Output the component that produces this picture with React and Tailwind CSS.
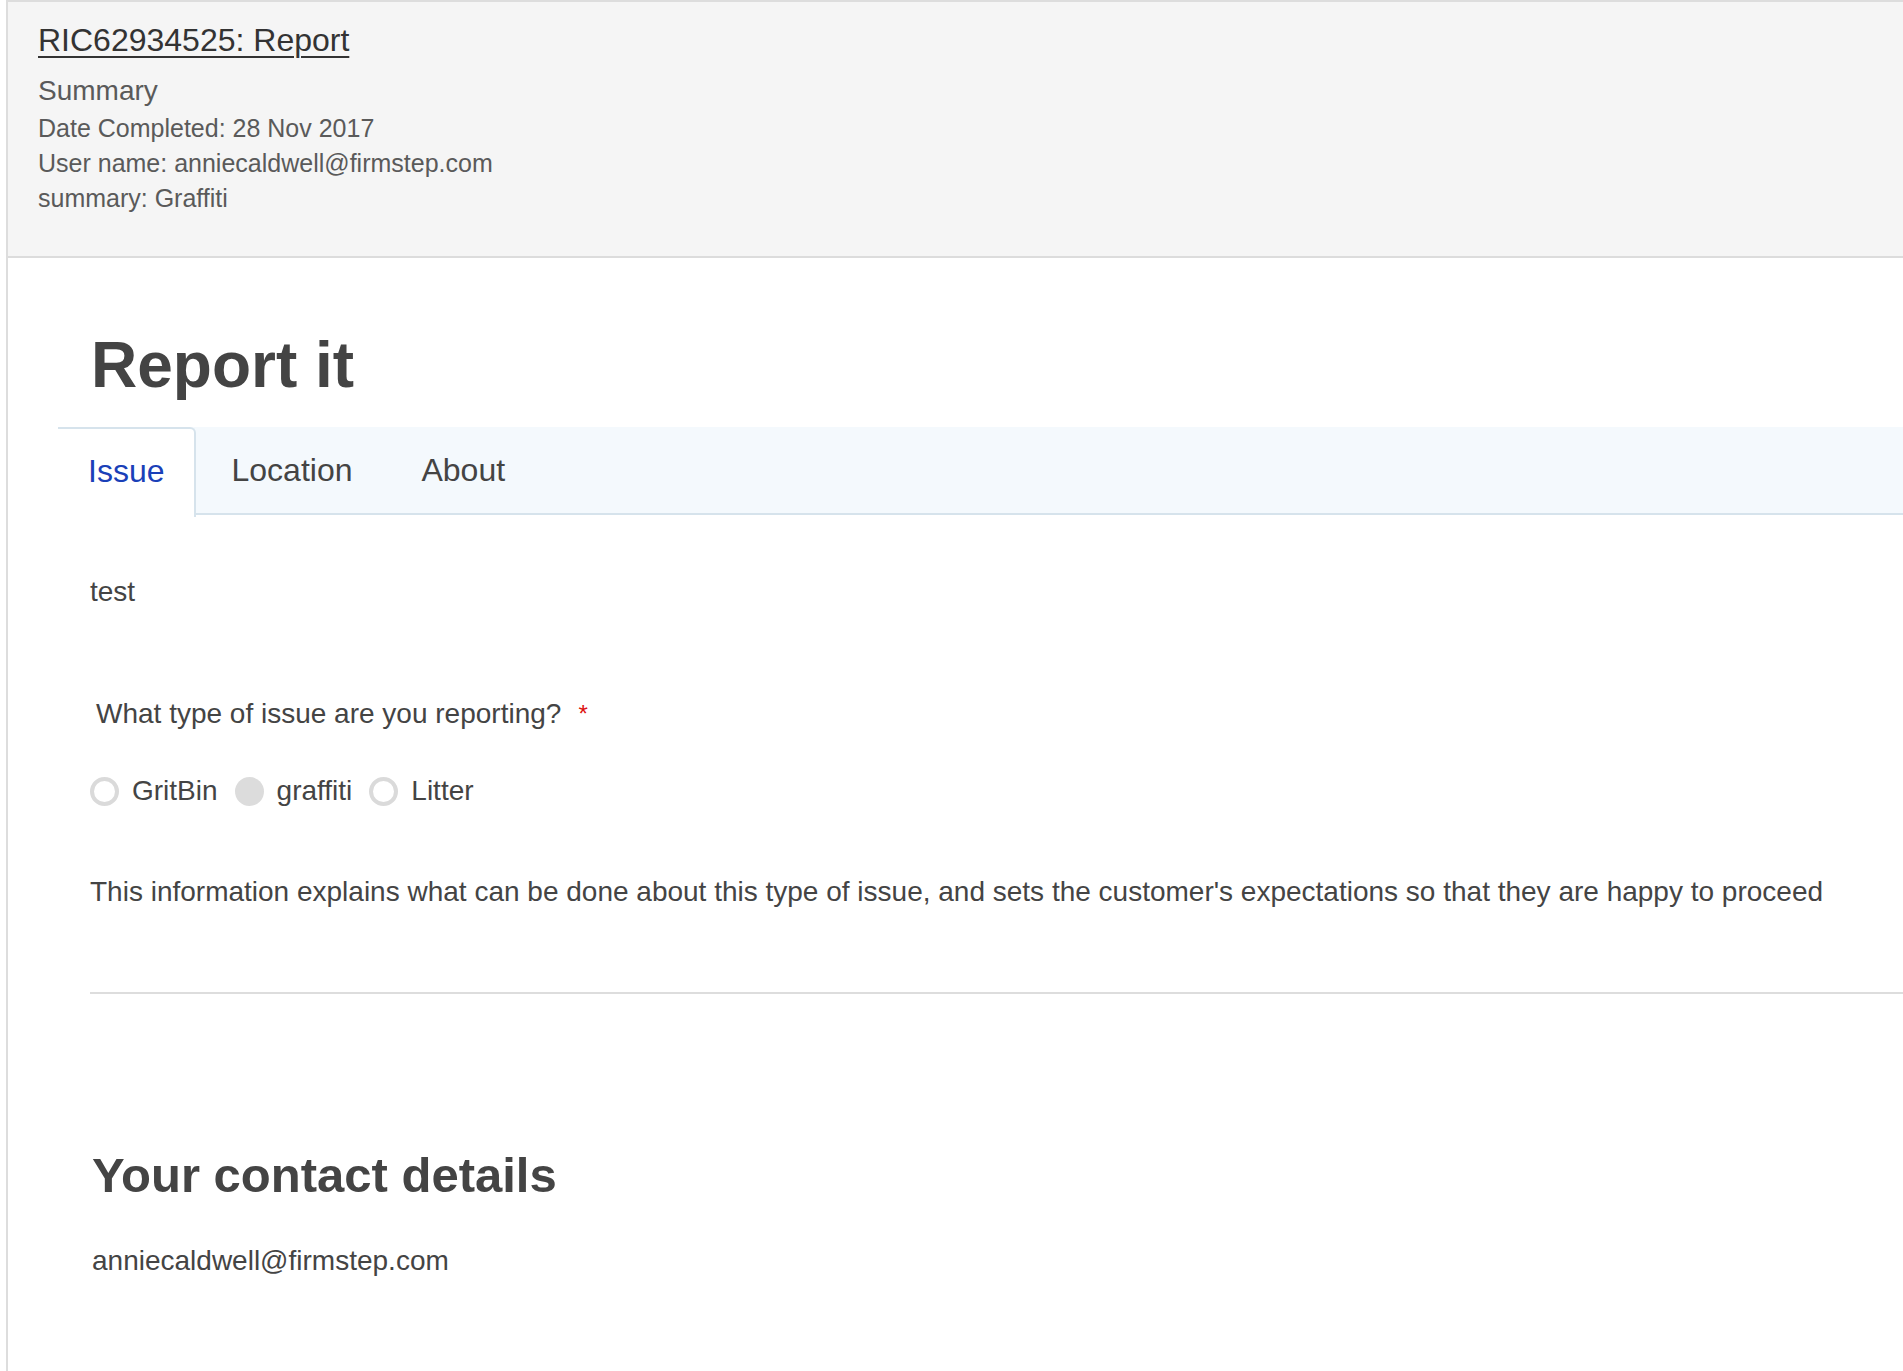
import React from "react";

function Radio({ checked }) {
  return checked ? (
    <span className="inline-block w-[29px] h-[29px] rounded-full bg-[#dcdcdc]" />
  ) : (
    <span className="inline-block w-[29px] h-[29px] rounded-full border-[4px] border-[#dadada] bg-white" />
  );
}

export default function App() {
  return (
    <div
      className="min-h-[1371px] bg-white"
      style={{ fontFamily: '"Liberation Sans", Arial, sans-serif' }}
    >
      <div className="ml-[6px] min-h-[1371px] border-l-2 border-t-2 border-[#dddddd]">
        {/* Header summary */}
        <div className="bg-[#f5f5f5] border-b-2 border-[#dcdcdc] pl-[30px] pt-[18px] pb-[40px] text-[#5a5a5a]">
          <div className="text-[32px] leading-[40px] text-[#333333] underline underline-offset-[5px] decoration-[1.5px]">
            RIC62934525: Report
          </div>
          <div className="mt-[13px] text-[28px] leading-[36px]">Summary</div>
          <div className="mt-[2px] text-[25px] leading-[35px]">Date Completed: 28 Nov 2017</div>
          <div className="text-[25px] leading-[35px]">User name: anniecaldwell@firmstep.com</div>
          <div className="text-[25px] leading-[35px]">summary: Graffiti</div>
        </div>

        {/* Body */}
        <div className="pl-[50px] text-[#444444]">
          <h1 className="mt-[75px] pl-[33px] text-[64px] leading-none font-bold text-[#444444]">
            Report it
          </h1>

          {/* Tabs */}
          <div className="mt-[30px] flex h-[88px] bg-[#f4f9fd] border-b-2 border-[#d6e3ec]">
            <div className="flex items-center h-[90px] pl-[30px] pr-[30px] pb-[4px] bg-white border-t-2 border-r-2 border-[#d6e3ec] rounded-tr-[6px] text-[32px] text-[#1a40b8]">
              Issue
            </div>
            <div className="flex items-center pl-[35px] pr-[35px] text-[32px] text-[#444444]">
              Location
            </div>
            <div className="flex items-center px-[34px] text-[32px] text-[#444444]">
              About
            </div>
          </div>

          <div className="pl-[32px]">
            <p className="mt-[57px] text-[28px] leading-[40px]">test</p>

            <div className="mt-[82px] pl-[6px] flex items-center text-[28px] leading-[40px]">
              <span>What type of issue are you reporting?</span>
              <span className="ml-[17px] text-[24px] text-[#dd1111]">*</span>
            </div>

            <div className="mt-[37px] flex items-center h-[40px] text-[28px]">
              <Radio />
              <span className="ml-[13px]">GritBin</span>
              <span className="ml-[17px] flex"><Radio checked /></span>
              <span className="ml-[13px]">graffiti</span>
              <span className="ml-[17px] flex"><Radio /></span>
              <span className="ml-[13px]">Litter</span>
            </div>

            <p className="mt-[61px] text-[28px] leading-[40px]">
              This information explains what can be done about this type of issue, and sets the customer's expectations so that they are happy to proceed
            </p>

            <hr className="mt-[80px] border-0 border-t-2 border-[#dddddd]" />

            <div className="pl-[2px]">
              <h2 className="mt-[157px] text-[49px] leading-none font-bold text-[#444444]">
                Your contact details
              </h2>

              <p className="mt-[41px] text-[28px] leading-[40px]">anniecaldwell@firmstep.com</p>
            </div>
          </div>
        </div>
      </div>
    </div>
  );
}
